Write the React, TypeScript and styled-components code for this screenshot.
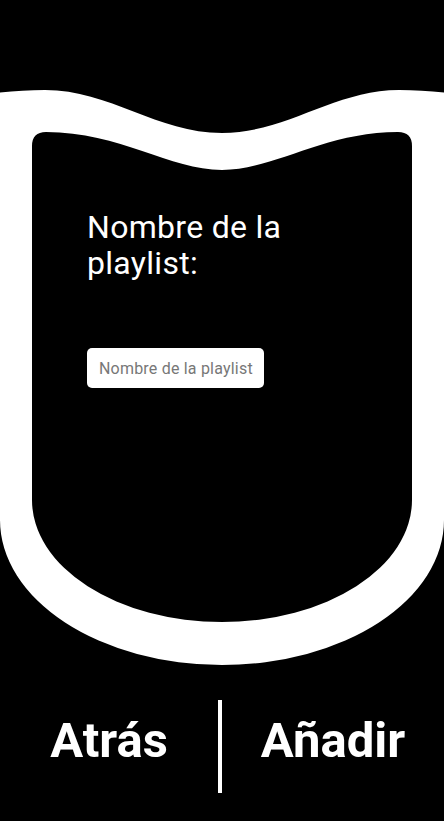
import React from "react";
import styled, { createGlobalStyle } from "styled-components";

const GlobalStyle = createGlobalStyle`
  html, body {
    margin: 0;
    padding: 0;
    background: #000;
  }
  body {
    font-family: Roboto, "Noto Sans", sans-serif;
  }
  * {
    box-sizing: border-box;
  }
`;

const Screen = styled.main`
  width: 444px;
  height: 821px;
  background: #000;
  display: flex;
  flex-direction: column;
  overflow: hidden;
`;

const Shield = styled.section`
  position: relative;
  margin-top: 88px;
  height: 578px;
  padding: 121px 0 0 87px;
`;

const ShieldArt = styled.svg`
  position: absolute;
  inset: 0;
  width: 100%;
  height: 100%;
  display: block;
`;

const Form = styled.div`
  position: relative;
  display: flex;
  flex-direction: column;
  align-items: flex-start;
  gap: 67px;
`;

const Label = styled.label`
  display: block;
  max-width: 260px;
  color: #fff;
  font-family: Roboto, "Noto Sans", sans-serif;
  font-size: 32px;
  font-weight: 400;
  line-height: 36px;
  letter-spacing: 0.3px;
`;

const NameInput = styled.input`
  width: 177px;
  height: 40px;
  border: none;
  border-radius: 5px;
  background: #fff;
  padding: 0 10px 0 12px;
  font-family: Roboto, "Noto Sans", sans-serif;
  font-size: 16px;
  letter-spacing: 0.2px;
  color: #222;
  outline: none;
  &::placeholder {
    color: #777;
  }
`;

const Footer = styled.footer`
  flex: 1;
  display: flex;
  align-items: flex-start;
  padding-top: 34px;
`;

const Action = styled.button<{ $width?: number }>`
  ${(p) => (p.$width ? `width: ${p.$width}px;` : "flex: 1;")}
  margin-top: 12px;
  padding: 0;
  background: none;
  border: none;
  color: #fff;
  font-family: Roboto, "Noto Sans", sans-serif;
  font-weight: 700;
  font-size: 49px;
  line-height: 57px;
  text-align: center;
  cursor: pointer;
`;

const Divider = styled.div`
  width: 4px;
  height: 93px;
  background: #fff;
`;

export default function App() {
  return (
    <>
      <GlobalStyle />
      <Screen>
        <Shield>
          <ShieldArt viewBox="0 88 444 578" preserveAspectRatio="none" aria-hidden="true">
            <path
              fill="#fff"
              d="M0,92.5 C15,91 30,90 45,90 C109.5,90 157.5,133 222,133 C286.5,133 334.5,90 399,90 C414,90 429,91 444,92.5 L444,520 A222,145 0 0 1 0,520 Z"
            />
            <path
              fill="#000"
              d="M32,146 Q32,132 46,132 C120,132 170,170 222,170 C274,170 324,132 398,132 Q412,132 412,146 L412,500 A190,122 0 0 1 32,500 Z"
            />
          </ShieldArt>
          <Form>
            <Label htmlFor="playlist-name">Nombre de la playlist:</Label>
            <NameInput id="playlist-name" placeholder="Nombre de la playlist" />
          </Form>
        </Shield>
        <Footer>
          <Action $width={218}>Atrás</Action>
          <Divider />
          <Action>Añadir</Action>
        </Footer>
      </Screen>
    </>
  );
}
